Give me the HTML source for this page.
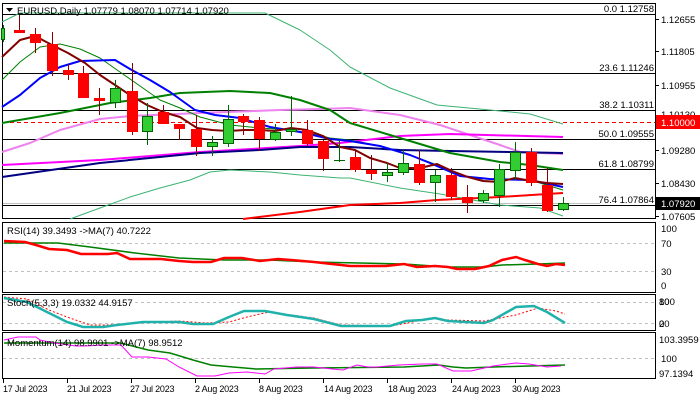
<!DOCTYPE html>
<html><head><meta charset="utf-8"><style>
html,body{margin:0;padding:0;background:#fff;width:700px;height:400px;overflow:hidden}
svg{display:block}
text{font-family:"Liberation Sans",sans-serif;font-size:9.5px;fill:#000}
.d{font-size:9px;letter-spacing:-0.2px}
</style></head><body>
<svg width="700" height="400" viewBox="0 0 700 400" xmlns="http://www.w3.org/2000/svg">
<rect width="700" height="400" fill="#fff"/>
<g fill="none" stroke="#000" stroke-width="1">
<rect x="2.5" y="3.5" width="653" height="215"/>
<rect x="2.5" y="222.5" width="653" height="70"/>
<rect x="2.5" y="294.5" width="653" height="36"/>
<rect x="2.5" y="332.5" width="653" height="46"/>
</g>
<g stroke="#000" stroke-width="1">
<line x1="3" y1="14.5" x2="655" y2="14.5"/>
<line x1="3" y1="73.5" x2="655" y2="73.5"/>
<line x1="3" y1="110.5" x2="655" y2="110.5"/>
<line x1="3" y1="139.5" x2="655" y2="139.5"/>
<line x1="3" y1="169.5" x2="655" y2="169.5"/>
<line x1="3" y1="205.5" x2="655" y2="205.5"/>
</g>
<line x1="3" y1="203.5" x2="600" y2="203.5" stroke="#c0c0c0"/>
<line x1="3" y1="122.5" x2="655" y2="122.5" stroke="#ff0000" stroke-dasharray="4,3"/>
<g fill="none" stroke-linejoin="round">
<polyline stroke="#3cb371" stroke-width="1" points="2,22 20,13 100,13 200,13 265,13 300,30 330,50 350,67 390,88 437,105 490,110 530,114 563,124"/>
<polyline stroke="#3cb371" stroke-width="1" points="70,219 100,208 130,197 160,188 190,180 210,172 230,170 250,171 270,172 300,175 340,178 350,178 400,188 440,194 500,205 540,208 563,216"/>
<polyline stroke="#ff0000" stroke-width="2" points="243,219 300,212 350,205 400,203 437,200 500,197 563,193"/>
<polyline stroke="#ee82ee" stroke-width="2" points="2,152 30,143 60,130 100,119 130,116 200,113 280,110 320,109 350,108 400,115 440,125 470,135 500,145 520,152 563,154"/>
<polyline stroke="#ff00ff" stroke-width="2" points="2,165 100,160 200,152 300,146 340,143 400,136 450,134 563,137"/>
<polyline stroke="#000080" stroke-width="2" points="2,177 100,163 200,153 260,150 300,147 350,147 400,150 450,151 563,153"/>
<polyline stroke="#008000" stroke-width="2" points="2,123 60,113 110,103 150,98 180,93 230,91 270,93 300,100 330,110 350,123 400,138 450,153 500,162 530,165 563,170"/>
<polyline stroke="#008000" stroke-width="1" points="2,80 20,62 40,47 60,44 80,49 100,58 120,72 140,86 160,100 180,108 200,117 230,125 260,128 290,130 310,133 330,138 350,140 380,146 410,155 440,166 470,178 500,180 530,180 563,190"/>
<polyline stroke="#0000ff" stroke-width="2" points="2,107 20,95 40,78 60,67 80,61 115,60 130,69 150,80 170,92 195,110 215,115 240,118 270,127 300,132 330,139 350,141 380,146 410,155 430,163 460,176 490,179 530,180 563,187"/>
<polyline stroke="#800000" stroke-width="2" points="2,57 20,40 35,36 52,45 68,53 85,63 100,75 115,85 130,95 147,105 163,112 180,117 197,128 212,130 228,131 245,130 260,130 275,131 291,128 307,130 323,136 340,147 355,150 370,158 387,163 400,168 420,168 437,164 452,171 468,177 483,181 499,182 515,178 531,181 547,183 563,184"/>
</g>
<g stroke-width="1">
<g stroke="#8b0000">
<line x1="19.5" y1="15" x2="19.5" y2="33"/><line x1="35.5" y1="28" x2="35.5" y2="53"/><line x1="52.5" y1="32" x2="52.5" y2="76"/><line x1="68.5" y1="64" x2="68.5" y2="80"/><line x1="83.5" y1="66" x2="83.5" y2="98"/><line x1="99.5" y1="88" x2="99.5" y2="115"/><line x1="132.5" y1="63" x2="132.5" y2="135"/><line x1="163.5" y1="105" x2="163.5" y2="124"/><line x1="179.5" y1="124" x2="179.5" y2="140"/><line x1="196.5" y1="115" x2="196.5" y2="156"/><line x1="243.5" y1="114" x2="243.5" y2="135"/><line x1="259.5" y1="117" x2="259.5" y2="151"/><line x1="307.5" y1="120" x2="307.5" y2="146"/><line x1="323.5" y1="140" x2="323.5" y2="171"/><line x1="355.5" y1="150" x2="355.5" y2="172"/><line x1="371.5" y1="155" x2="371.5" y2="180"/><line x1="419.5" y1="150" x2="419.5" y2="185"/><line x1="451.5" y1="168" x2="451.5" y2="200"/><line x1="467.5" y1="185" x2="467.5" y2="213"/><line x1="531.5" y1="148" x2="531.5" y2="186"/><line x1="547.5" y1="168" x2="547.5" y2="212"/>
</g>
<g stroke="#006400">
<line x1="3.5" y1="25" x2="3.5" y2="42"/><line x1="115.5" y1="80" x2="115.5" y2="108"/><line x1="147.5" y1="103" x2="147.5" y2="145"/><line x1="212.5" y1="136" x2="212.5" y2="156"/><line x1="228.5" y1="105" x2="228.5" y2="147"/><line x1="275.5" y1="124" x2="275.5" y2="141"/><line x1="291.5" y1="96" x2="291.5" y2="136"/><line x1="339.5" y1="140" x2="339.5" y2="162"/><line x1="387.5" y1="163" x2="387.5" y2="182"/><line x1="403.5" y1="150" x2="403.5" y2="175"/><line x1="435.5" y1="170" x2="435.5" y2="202"/><line x1="483.5" y1="190" x2="483.5" y2="203"/><line x1="499.5" y1="164" x2="499.5" y2="207"/><line x1="515.5" y1="142" x2="515.5" y2="180"/><line x1="563.5" y1="197" x2="563.5" y2="211"/>
<line x1="334" y1="160.5" x2="345" y2="160.5"/>
</g>
<g fill="#ff0000">
<rect x="14" y="30" width="11" height="3"/><rect x="30" y="34" width="11" height="9"/><rect x="47" y="44" width="11" height="27"/><rect x="63" y="70" width="11" height="5"/><rect x="78" y="73" width="11" height="25"/><rect x="94" y="98" width="11" height="3"/><rect x="127" y="91" width="11" height="41"/><rect x="158" y="112" width="11" height="12"/><rect x="174" y="124" width="11" height="5"/><rect x="191" y="129" width="11" height="18"/><rect x="238" y="116" width="11" height="6"/><rect x="254" y="120" width="11" height="19"/><rect x="302" y="130" width="11" height="14"/><rect x="318" y="141" width="11" height="18"/><rect x="350" y="157" width="11" height="13"/><rect x="366" y="170" width="11" height="4"/><rect x="414" y="164" width="11" height="19"/><rect x="446" y="175" width="11" height="22"/><rect x="462" y="197" width="11" height="6"/><rect x="526" y="152" width="11" height="31"/><rect x="542" y="185" width="11" height="26"/>
</g>
<g fill="#32cd32" stroke="#006400">
<rect x="1.5" y="28.5" width="3" height="11"/><rect x="110.5" y="88.5" width="10" height="14"/><rect x="142.5" y="116.5" width="10" height="15"/><rect x="207.5" y="142.5" width="10" height="4"/><rect x="223.5" y="119.5" width="10" height="24"/><rect x="270.5" y="132.5" width="10" height="7"/><rect x="286.5" y="129.5" width="10" height="2"/><rect x="382.5" y="172.5" width="10" height="3"/><rect x="398.5" y="163.5" width="10" height="9"/><rect x="430.5" y="175.5" width="10" height="7"/><rect x="478.5" y="193.5" width="10" height="7"/><rect x="494.5" y="169.5" width="10" height="26"/><rect x="510.5" y="152.5" width="10" height="18"/><rect x="558.5" y="203.5" width="10" height="6"/>
</g>
</g>
<path d="M6 8 L13 8 L9.5 12 Z" fill="#000"/>
<text x="17" y="14">EURUSD,Daily  1.07779 1.08070 1.07714 1.07920</text>
<g text-anchor="end">
<text x="654" y="12">0.0 1.12758</text>
<text x="654" y="71">23.6 1.11246</text>
<text x="654" y="108">38.2 1.10311</text>
<text x="654" y="137">50.0 1.09555</text>
<text x="654" y="167">61.8 1.08799</text>
<text x="654" y="203">76.4 1.07864</text>
</g>
<g stroke="#000"><line x1="656" y1="19.5" x2="659" y2="19.5"/><line x1="656" y1="51.5" x2="659" y2="51.5"/><line x1="656" y1="85.5" x2="659" y2="85.5"/><line x1="656" y1="150.5" x2="659" y2="150.5"/><line x1="656" y1="183.5" x2="659" y2="183.5"/><line x1="656" y1="216.5" x2="659" y2="216.5"/></g>
<text x="661" y="23">1.12655</text>
<text x="661" y="55">1.11805</text>
<text x="661" y="89">1.10955</text>
<text x="661" y="118">1.10130</text>
<rect x="656" y="115" width="44" height="14" fill="#ff0000"/>
<text x="661" y="126" style="fill:#fff">1.10000</text>
<text x="661" y="154">1.09280</text>
<text x="661" y="187">1.08430</text>
<rect x="656" y="197" width="44" height="13" fill="#000"/>
<text x="661" y="207" style="fill:#fff">1.07920</text>
<text x="661" y="220">1.07605</text>
<g stroke="#c0c0c0" stroke-dasharray="3,3"><line x1="3" y1="243.5" x2="655" y2="243.5"/><line x1="3" y1="271.5" x2="655" y2="271.5"/></g>
<polyline fill="none" stroke="#008000" stroke-width="1.5" points="4,243 58,243 90,247 135,253 179,258 224,260 269,260 314,262 359,263 404,264 448,267 484,267 502,265 538,264 565,263"/>
<polyline fill="none" stroke="#ff0000" stroke-width="2.5" points="4,241 25,242 36,245 49,249 67,250 81,254 108,254 117,253 130,259 143,259 161,259 179,261 193,262 211,262 224,258 242,258 260,261 278,259 291,260 314,262 323,263 350,266 386,266 404,264 417,267 435,266 448,267 457,269 475,269 489,266 502,260 516,257 525,260 538,264 547,266 556,264 565,265"/>
<text x="7" y="234">RSI(14) 39.3493  -&gt;MA(7) 40.7222</text>
<text x="661" y="232">100</text><text x="661" y="247">70</text><text x="661" y="275">30</text><text x="661" y="289">0</text>
<g stroke="#c0c0c0" stroke-dasharray="3,3"><line x1="3" y1="302.5" x2="655" y2="302.5"/><line x1="3" y1="323.5" x2="655" y2="323.5"/></g>
<polyline fill="none" stroke="#ff0000" stroke-width="1" stroke-dasharray="2,2" points="4,297 27,299 49,310 67,317 90,325 108,325 135,323 179,321 206,323 229,322 247,317 269,312 291,315 314,318 341,325 390,326 408,323 430,318 448,320 484,321 516,315 538,308 556,311 565,314"/>
<polyline fill="none" stroke="#20b2aa" stroke-width="2.5" points="4,298 27,302 49,313 67,322 83,327 103,327 117,325 143,322 179,322 193,324 213,324 229,317 244,311 265,311 287,315 314,319 341,326 390,326 406,321 422,320 435,318 448,321 484,323 493,320 516,307 534,306 547,312 565,323"/>
<text x="7" y="306">Stoch(5,3,3) 19.0332 44.9157</text>
<text x="659" y="305">100</text><text x="659" y="305">80</text>
<text x="659" y="327">20</text><text x="659" y="327">0</text>
<line x1="3" y1="358.5" x2="655" y2="358.5" stroke="#c0c0c0" stroke-dasharray="3,3"/>
<polyline fill="none" stroke="#008000" stroke-width="1.5" points="4,343 121,343 148,350 170,353 193,360 211,365 233,367 256,369 314,368 404,367 439,365 453,367 466,368 493,367 565,365"/>
<polyline fill="none" stroke="#ff00ff" stroke-width="1" points="4,340 18,337 36,337 40,340 54,343 76,346 85,346 103,345 121,345 132,357 148,357 166,359 179,367 197,376 215,376 229,373 247,372 265,374 274,369 296,367 314,367 332,369 343,370 357,365 368,367 377,367 399,365 422,364 437,364 453,371 471,371 493,366 516,363 529,364 547,367 561,366"/>
<text x="7" y="346">Momentum(14) 98.9901  -&gt;MA(7) 98.9512</text>
<text x="659" y="343">103.3959</text><text x="661" y="362">100</text><text x="659" y="377">97.1394</text>
<g stroke="#000"><line x1="3.5" y1="379" x2="3.5" y2="383"/><line x1="67.5" y1="379" x2="67.5" y2="383"/><line x1="131.5" y1="379" x2="131.5" y2="383"/><line x1="195.5" y1="379" x2="195.5" y2="383"/><line x1="259.5" y1="379" x2="259.5" y2="383"/><line x1="323.5" y1="379" x2="323.5" y2="383"/><line x1="387.5" y1="379" x2="387.5" y2="383"/><line x1="451.5" y1="379" x2="451.5" y2="383"/><line x1="515.5" y1="379" x2="515.5" y2="383"/></g>
<g class="d">
<text class="d" x="3" y="392">17 Jul 2023</text>
<text class="d" x="67" y="392">21 Jul 2023</text>
<text class="d" x="130" y="392">27 Jul 2023</text>
<text class="d" x="195" y="392">2 Aug 2023</text>
<text class="d" x="259" y="392">8 Aug 2023</text>
<text class="d" x="324" y="392">14 Aug 2023</text>
<text class="d" x="388" y="392">18 Aug 2023</text>
<text class="d" x="452" y="392">24 Aug 2023</text>
<text class="d" x="512" y="392">30 Aug 2023</text>
</g>
</svg>
</body></html>
